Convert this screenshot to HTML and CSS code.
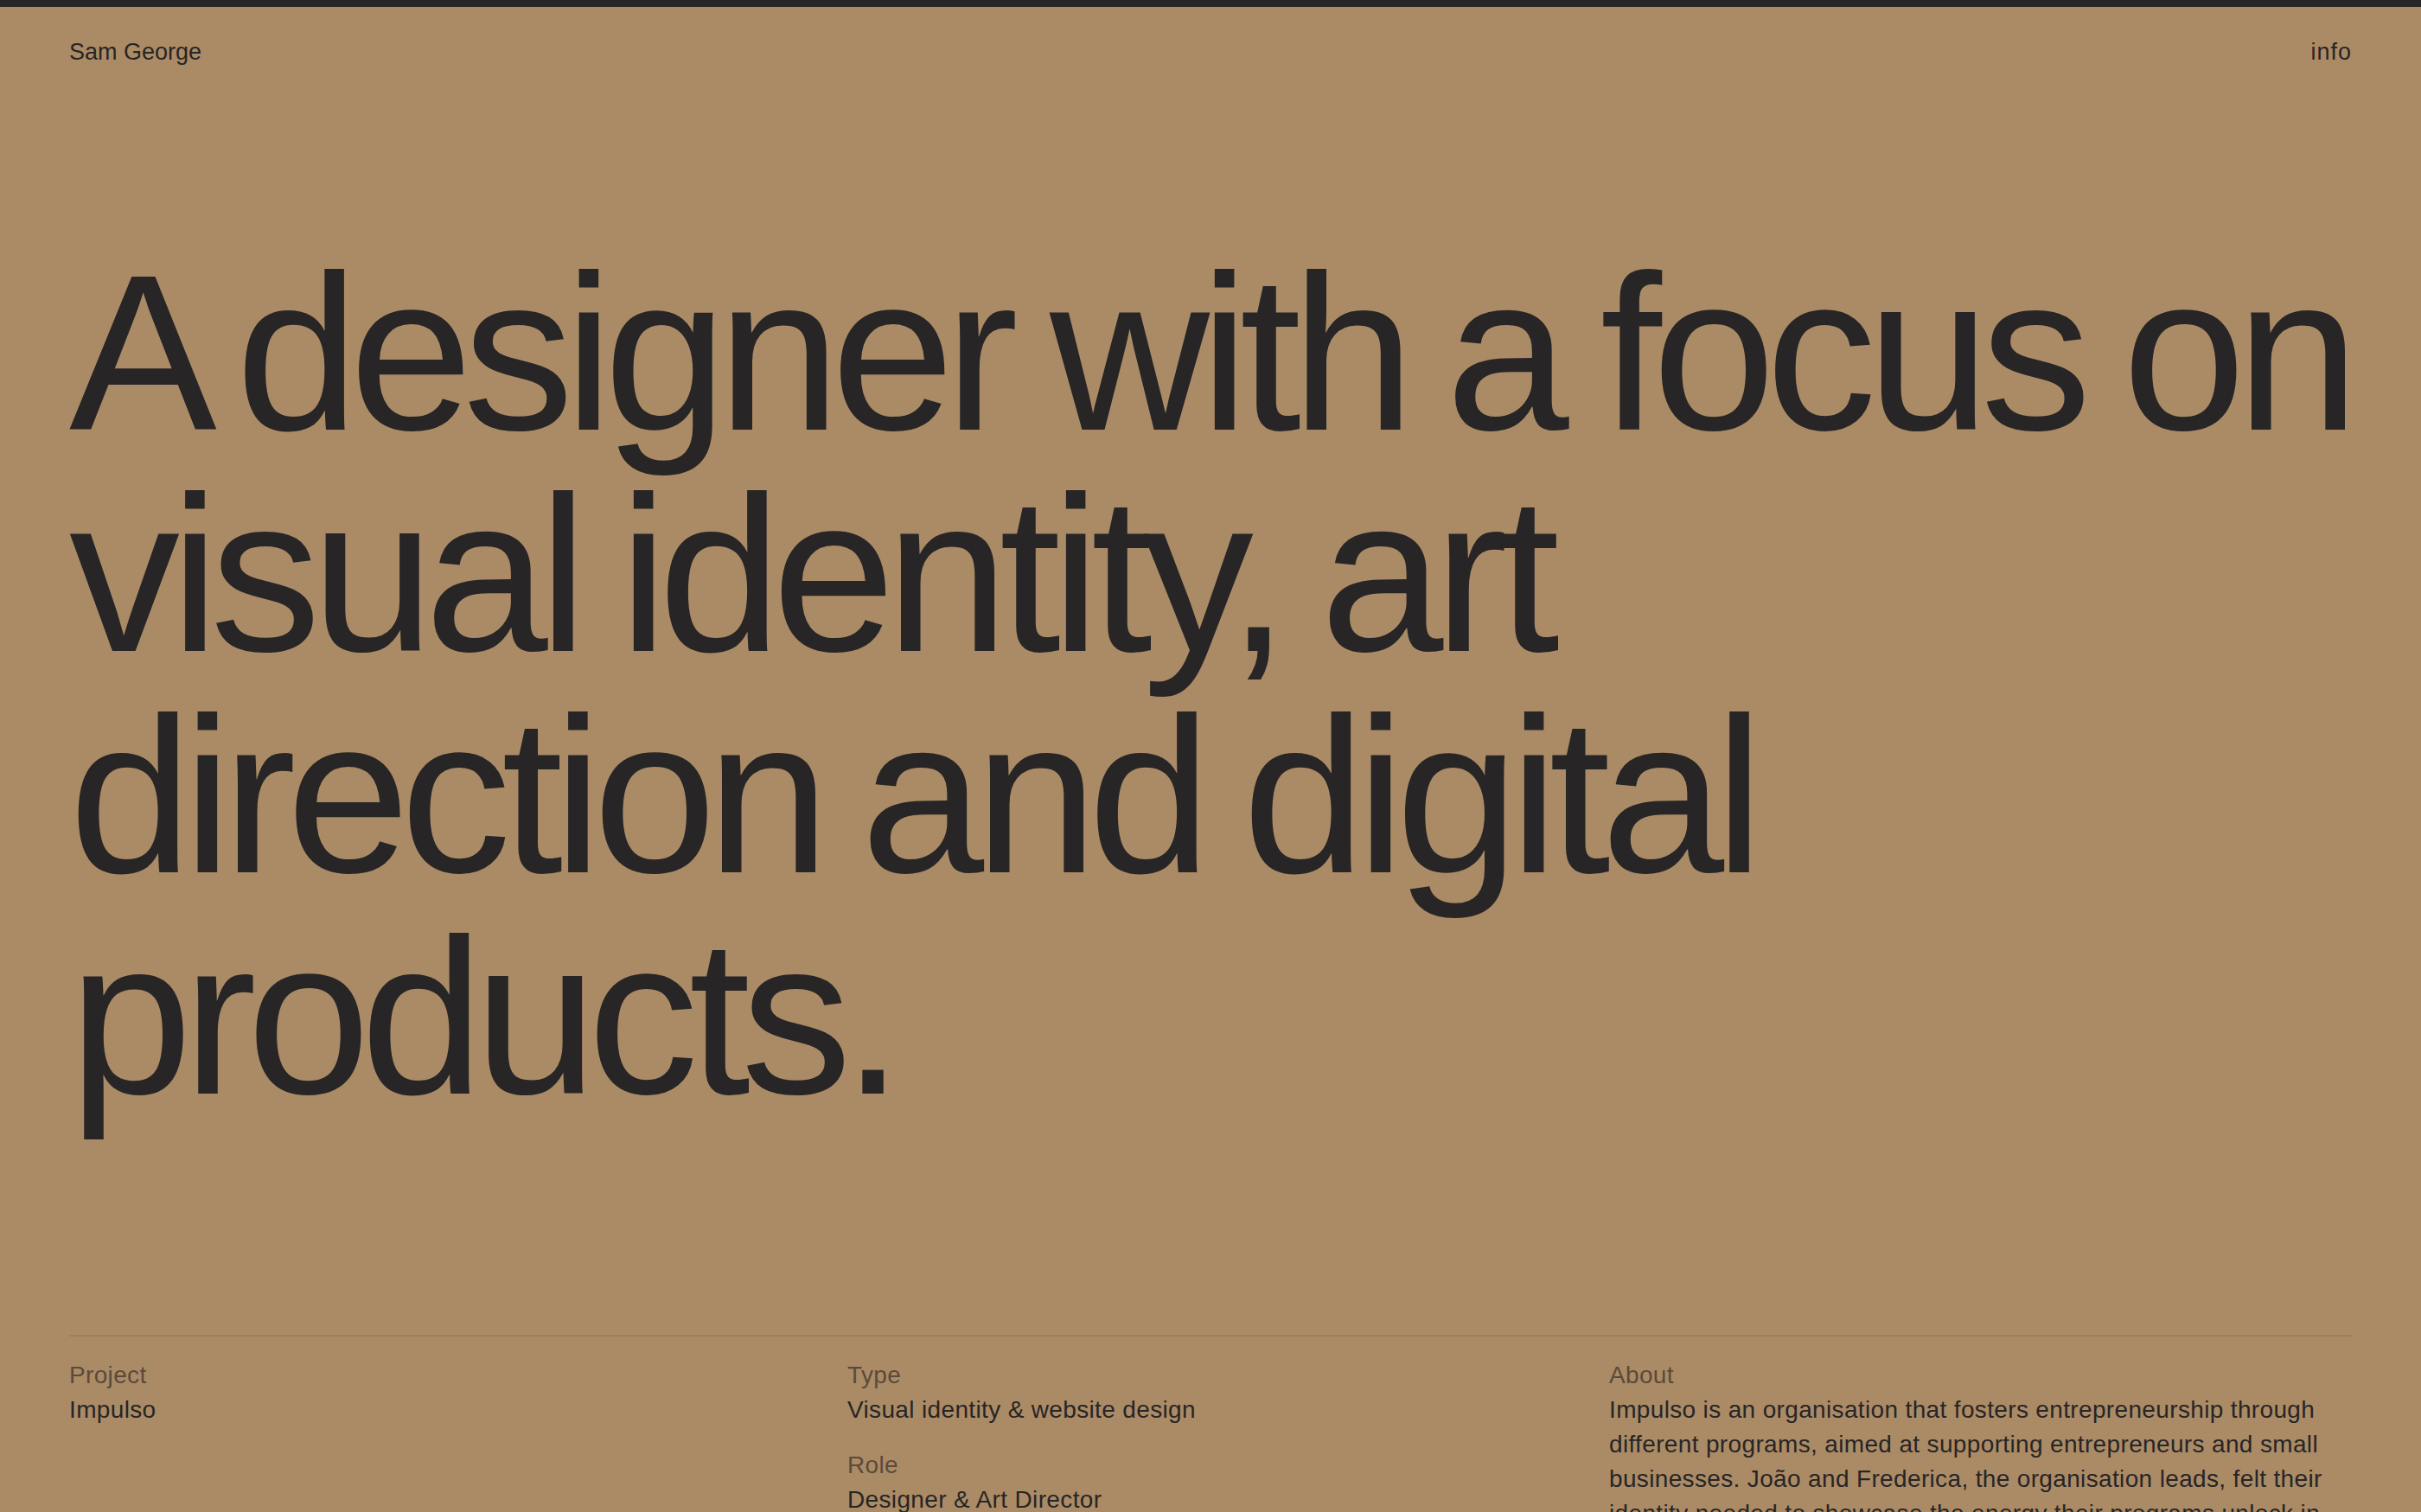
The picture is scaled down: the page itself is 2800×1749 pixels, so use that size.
FILE: index.html
```html
<!DOCTYPE html>
<html lang="en">
<head>
<meta charset="utf-8">
<title>Sam George</title>
<link rel="stylesheet" href="styles.css">
</head>
<body>
<div class="topbar"></div>
<header class="site-header">
  <a class="name" href="#">Sam George</a>
  <a class="info" href="#">info</a>
</header>
<main class="page">
  <h1 class="headline">A designer with a focus on<br>visual identity, art<br>direction and digital<br>products.</h1>
  <section class="project">
    <div class="col">
      <div class="label">Project</div>
      <div class="value">Impulso</div>
    </div>
    <div class="col">
      <div class="group">
        <div class="label">Type</div>
        <div class="value">Visual identity &amp; website design</div>
      </div>
      <div class="group">
        <div class="label">Role</div>
        <div class="value">Designer &amp; Art Director</div>
      </div>
    </div>
    <div class="col">
      <div class="label">About</div>
      <p class="value about">Impulso is an organisation that fosters entrepreneurship through different programs, aimed at supporting entrepreneurs and small businesses. João and Frederica, the organisation leads, felt their identity needed to showcase the energy their programs unlock in the people and businesses they work with.</p>
    </div>
  </section>
</main>
</body>
</html>
```

FILE: styles.css
```css
html, body {
  margin: 0;
  padding: 0;
}
body {
  background: #ab8b65;
  color: #272526;
  font-family: "Liberation Sans", Arial, sans-serif;
  font-size: 27px;
  line-height: 40px;
  min-height: 100vh;
}
a {
  color: inherit;
  text-decoration: none;
}
.topbar {
  height: 8px;
  background: #272526;
}
.site-header {
  display: flex;
  justify-content: space-between;
  padding: 32px 80px 0;
}
.info {
  letter-spacing: 1px;
}
.page {
  padding: 0 80px;
}
.headline {
  margin: 200px 0 0;
  font-weight: 400;
  font-size: 256px;
  line-height: 256px;
  letter-spacing: -11px;
  word-spacing: -13px;
  white-space: nowrap;
}
.project {
  margin-top: 240px;
  border-top: 2px solid #9d7e5a;
  padding-top: 25px;
  display: grid;
  grid-template-columns: 860px 841px 1fr;
  column-gap: 40px;
  font-size: 28px;
  letter-spacing: 0.35px;
}
.label {
  color: #5a4a3b;
}
.value {
  margin: 0;
}
.group + .group {
  margin-top: 24px;
}
```
